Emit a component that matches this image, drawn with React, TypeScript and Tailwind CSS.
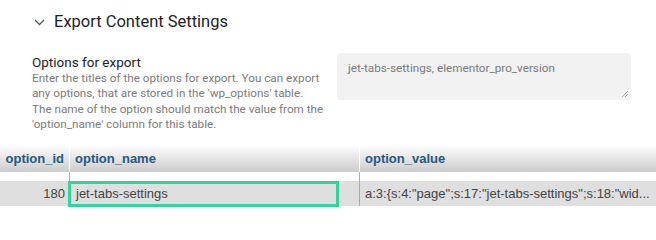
import React from "react";

export default function App() {
  return (
    <div className="w-[656px] h-[225px] bg-white overflow-hidden relative" style={{ fontFamily: "Roboto, 'Liberation Sans', sans-serif" }}>
      <div className="flex items-center h-[44px] pl-[34px] pt-[1px]">
        <svg width="11" height="7" viewBox="0 0 11 7" className="mr-[9px]">
          <path d="M1 1l4.5 4.5L10 1" fill="none" stroke="#50575e" strokeWidth="1.3" />
        </svg>
        <span className="text-[16.5px] text-[#1d2327] leading-none">Export Content Settings</span>
      </div>
      <div className="flex pl-[32px] pt-[10px]">
        <div className="w-[291px] shrink-0">
          <div className="text-[13.5px] text-[#1d2327] leading-[17px]">Options for export</div>
          <div className="text-[11.7px] text-[#7b7b7b] leading-[15.4px] whitespace-nowrap">
            Enter the titles of the options for export. You can export<br />
            any options, that are stored in the 'wp_options' table.<br />
            The name of the option should match the value from the<br />
            'option_name' column for this table.
          </div>
        </div>
        <div className="ml-[14px] -mt-[1px] w-[294px] h-[47px] shrink-0 bg-[#f2f2f2] rounded-[4px] relative pl-[11px] pt-[8px] text-[11.7px] text-[#7a7a7a] leading-[14px]">
          jet-tabs-settings, elementor_pro_version
          <svg width="8" height="8" viewBox="0 0 8 8" className="absolute right-[2px] bottom-[2px]">
            <path d="M7 1L1 7M7 4L4 7" stroke="#555" strokeWidth="0.8" strokeDasharray="1 0.6" />
          </svg>
        </div>
      </div>
      <div className="absolute left-0 top-[145px] w-[656px]" style={{ fontFamily: "'Liberation Sans', Arial, sans-serif" }}>
        <div className="flex h-[27px] bg-gradient-to-b from-white to-[#cccccc] text-[13px] font-bold text-[#235a81]">
          <div className="w-[70px] shrink-0 border-r border-white flex items-center justify-end pr-[5px]">option_id</div>
          <div className="w-[290px] shrink-0 border-r border-white flex items-center pl-[5px]">option_name</div>
          <div className="flex-1 min-w-0 flex items-center pl-[5px]">option_value</div>
        </div>
        <div className="flex h-[9px]">
          <div className="w-[70px] shrink-0 border-r border-[#aaaaaa]"></div>
          <div className="w-[290px] shrink-0 border-r border-[#aaaaaa]"></div>
        </div>
        <div className="flex h-[25px] bg-[#dfdfdf] text-[13px] text-[#444444]">
          <div className="w-[70px] shrink-0 border-r border-[#aaaaaa] flex items-center justify-end pr-[4px]">180</div>
          <div className="w-[290px] shrink-0 border-r border-[#aaaaaa] flex items-center pl-[6px]">jet-tabs-settings</div>
          <div className="flex-1 min-w-0 flex items-center pl-[5px] whitespace-nowrap overflow-hidden">a:3:{"{"}s:4:"page";s:17:"jet-tabs-settings";s:18:"wid...</div>
        </div>
        <div className="absolute left-[68px] top-[36px] w-[271px] h-[26px] border-[3px] border-[#33d49c]"></div>
      </div>
    </div>
  );
}
